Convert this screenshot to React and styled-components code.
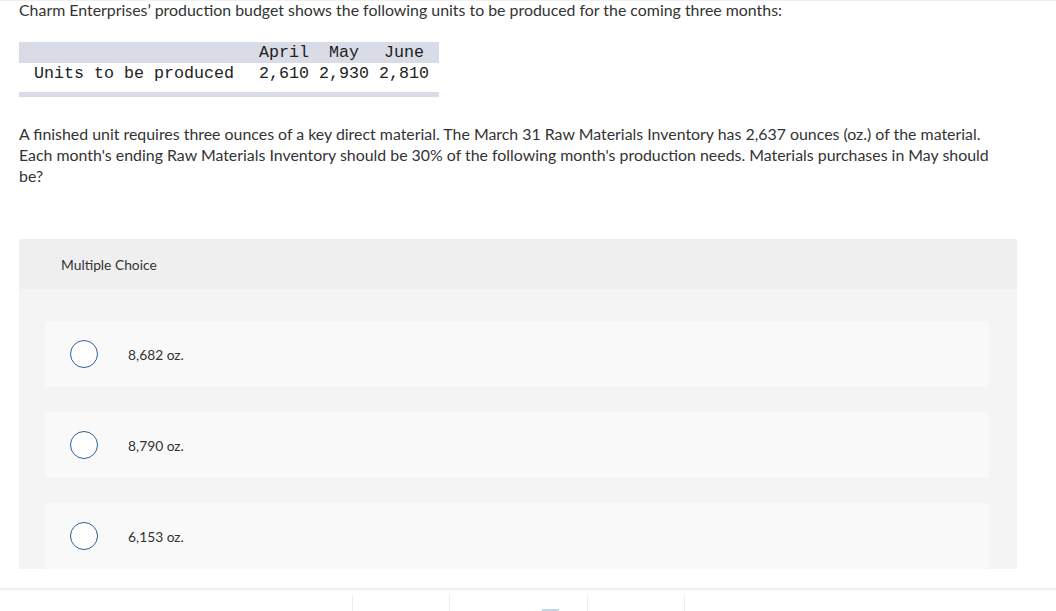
import React from "react";
import styled, { createGlobalStyle } from "styled-components";

const Global = createGlobalStyle`
  html, body { margin: 0; padding: 0; background: #fff; }
  body { font-family: "Lato", "Open Sans", sans-serif; color: #333; overflow: hidden; }
`;

const Page = styled.div`
  width: 1056px;
  height: 611px;
  display: flex;
  flex-direction: column;
  border-top: 1px solid #f0f0f0;
  box-sizing: border-box;
`;

const Scroll = styled.div`
  height: 568px;
  overflow: hidden;
  padding-left: 19px;
  padding-right: 39px;
`;

const Intro = styled.p`
  margin: 0;
  padding-top: 0;
  font-size: 15.9px;
  line-height: 17px;
  color: #333;
  white-space: nowrap;
`;

const Table = styled.table`
  margin-top: 24px;
  border-collapse: collapse;
  table-layout: fixed;
  width: 420px;
  font-family: "Liberation Mono", "DejaVu Sans Mono", monospace;
  font-size: 16.67px;
  color: #222;
  border-bottom: 5px solid #d9dce6;
`;

const HeadRow = styled.tr`
  background: #d9dce6;
`;

const Cell = styled.td`
  padding: 0 ${(p) => p.$pr ?? 5}px 0 ${(p) => p.$pl ?? 5}px;
  width: ${(p) => p.$w}px;
  box-sizing: border-box;
  height: 21px;
  line-height: 21px;
  white-space: nowrap;
  text-align: ${(p) => p.$align || "center"};
`;

const Spacer = styled.tr`
  td { height: 8px; padding: 0; }
`;

const Question = styled.p`
  margin: 26px 0 0;
  font-size: 15.9px;
  line-height: 21px;
  color: #333;
  width: 985px;
`;

const Panel = styled.section`
  margin-top: 53px;
  width: 998px;
  border-radius: 4px 4px 0 0;
  background: #f4f4f4;
  padding-bottom: 30px;
`;

const PanelHeader = styled.div`
  height: 50px;
  background: #efefef;
  border-radius: 4px 4px 0 0;
  display: flex;
  align-items: center;
  padding-left: 42px;
  font-size: 13.8px;
  color: #333;
`;

const Options = styled.div`
  display: flex;
  flex-direction: column;
  gap: 25px;
  padding: 32px 28px 0 26px;
`;

const Option = styled.div`
  height: 66px;
  background: #f9f9f9;
  border-radius: 3px;
  display: flex;
  align-items: center;
  padding-left: 25px;
`;

const Radio = styled.span`
  width: 26px;
  height: 26px;
  border-radius: 50%;
  border: 1.5px solid #2d6196;
  background: #fff;
  flex: none;
`;

const OptionText = styled.span`
  margin-left: 30px;
  font-size: 13.8px;
  color: #333;
`;

const Footer = styled.footer`
  margin-top: 19px;
  border-top: 2px solid #efefef;
  flex: 1;
  display: flex;
  padding-top: 5px;
  padding-left: 352px;
`;

const FooterCell = styled.div`
  width: ${(p) => p.$w}px;
  border-left: 1px solid #ececec;
  position: relative;
  &:last-child { border-right: 1px solid #ececec; }
`;

const Glyph = styled.span`
  position: absolute;
  left: ${(p) => p.$left}px;
  top: 14px;
  width: 17px;
  height: 3px;
  background: #c6d3ea;
`;

const options = ["8,682 oz.", "8,790 oz.", "6,153 oz."];

export default function App() {
  return (
    <Page>
      <Global />
      <Scroll>
        <Intro>
          Charm Enterprises’ production budget shows the following units to be produced for the coming three months:
        </Intro>
        <Table>
          <tbody>
            <HeadRow>
              <Cell $w={235} $pl={15} $align="left" />
              <Cell $w={60}>April</Cell>
              <Cell $w={60}>May</Cell>
              <Cell $w={65} $pr={10}>June</Cell>
            </HeadRow>
            <tr>
              <Cell $w={235} $pl={15} $align="left">Units to be produced</Cell>
              <Cell $w={60}>2,610</Cell>
              <Cell $w={60}>2,930</Cell>
              <Cell $w={65} $pr={10}>2,810</Cell>
            </tr>
            <Spacer>
              <td colSpan={4} />
            </Spacer>
          </tbody>
        </Table>
        <Question>
          A finished unit requires three ounces of a key direct material. The March 31 Raw Materials Inventory has 2,637 ounces (oz.) of the material. Each month's ending Raw Materials Inventory should be 30% of the following month's production needs. Materials purchases in May should be?
        </Question>
        <Panel>
          <PanelHeader>Multiple Choice</PanelHeader>
          <Options>
            {options.map((o) => (
              <Option key={o}>
                <Radio />
                <OptionText>{o}</OptionText>
              </Option>
            ))}
          </Options>
        </Panel>
      </Scroll>
      <Footer>
        <FooterCell $w={96} />
        <FooterCell $w={137}>
          <Glyph $left={92} />
        </FooterCell>
        <FooterCell $w={96} />
      </Footer>
    </Page>
  );
}
